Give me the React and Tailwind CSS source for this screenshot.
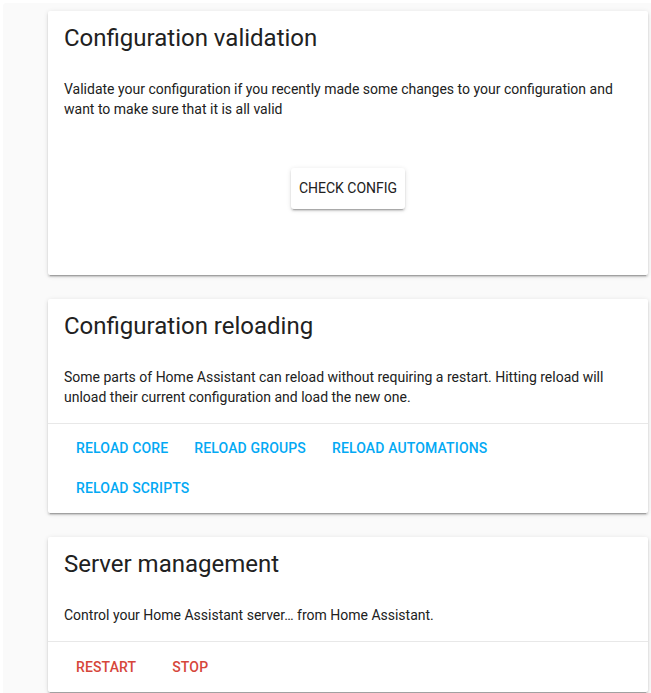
import React from "react";

const shadow =
  "shadow-[0_2px_2px_0_rgba(0,0,0,0.14),0_1px_5px_0_rgba(0,0,0,0.12),0_3px_1px_-2px_rgba(0,0,0,0.2)]";

function Card({ title, children, className = "" }) {
  return (
    <div className={`w-[600px] bg-white rounded-[2px] ${shadow} ${className}`}>
      <div className="px-4 pt-[11px] text-[24px] leading-[32px] text-[#212121] font-normal">
        {title}
      </div>
      {children}
    </div>
  );
}

function Body({ children }) {
  return (
    <div className="px-4 pt-[25px] pb-4 text-[14px] leading-[20px] text-[#212121]">
      {children}
    </div>
  );
}

function FlatButton({ children, color }) {
  return (
    <button
      className={`mx-[5px] min-w-[72px] h-[40px] px-[8px] text-center text-[14px] font-medium uppercase tracking-[0.01em] ${color}`}
    >
      {children}
    </button>
  );
}

export default function App() {
  return (
    <div
      className="bg-white pt-[3px] pl-[3px] min-h-[693px]"
      style={{ fontFamily: "Roboto, 'Noto Sans', sans-serif" }}
    >
      <div className="bg-[#fafafa] rounded-tl-[3px] pl-[45px] pt-[8px] pb-6 min-h-[690px] flex flex-col gap-[24px]">
        <Card title="Configuration validation" className="h-[264px]">
          <Body>
            Validate your configuration if you recently made some changes to your
            configuration and want to make sure that it is all valid
          </Body>
          <div className="flex justify-center pt-[33px]">
            <button
              className={`h-[41px] w-[114px] bg-white rounded-[3px] text-[14px] font-normal text-[#212121] ${shadow}`}
            >
              CHECK CONFIG
            </button>
          </div>
        </Card>

        <Card title="Configuration reloading">
          <Body>
            Some parts of Home Assistant can reload without requiring a restart.
            Hitting reload will unload their current configuration and load the new
            one.
          </Body>
          <div className="border-t border-[#e8e8e8] px-[15px] pt-[4px] pb-[5px] flex flex-wrap">
            <FlatButton color="text-[#03a9f4]">Reload Core</FlatButton>
            <FlatButton color="text-[#03a9f4]">Reload Groups</FlatButton>
            <FlatButton color="text-[#03a9f4]">Reload Automations</FlatButton>
            <FlatButton color="text-[#03a9f4]">Reload Scripts</FlatButton>
          </div>
        </Card>

        <Card title="Server management">
          <Body>Control your Home Assistant server… from Home Assistant.</Body>
          <div className="border-t border-[#e8e8e8] px-[15px] py-[5px] flex flex-wrap">
            <FlatButton color="text-[#d6463a]">Restart</FlatButton>
            <FlatButton color="text-[#d6463a]">Stop</FlatButton>
          </div>
        </Card>
      </div>
    </div>
  );
}
